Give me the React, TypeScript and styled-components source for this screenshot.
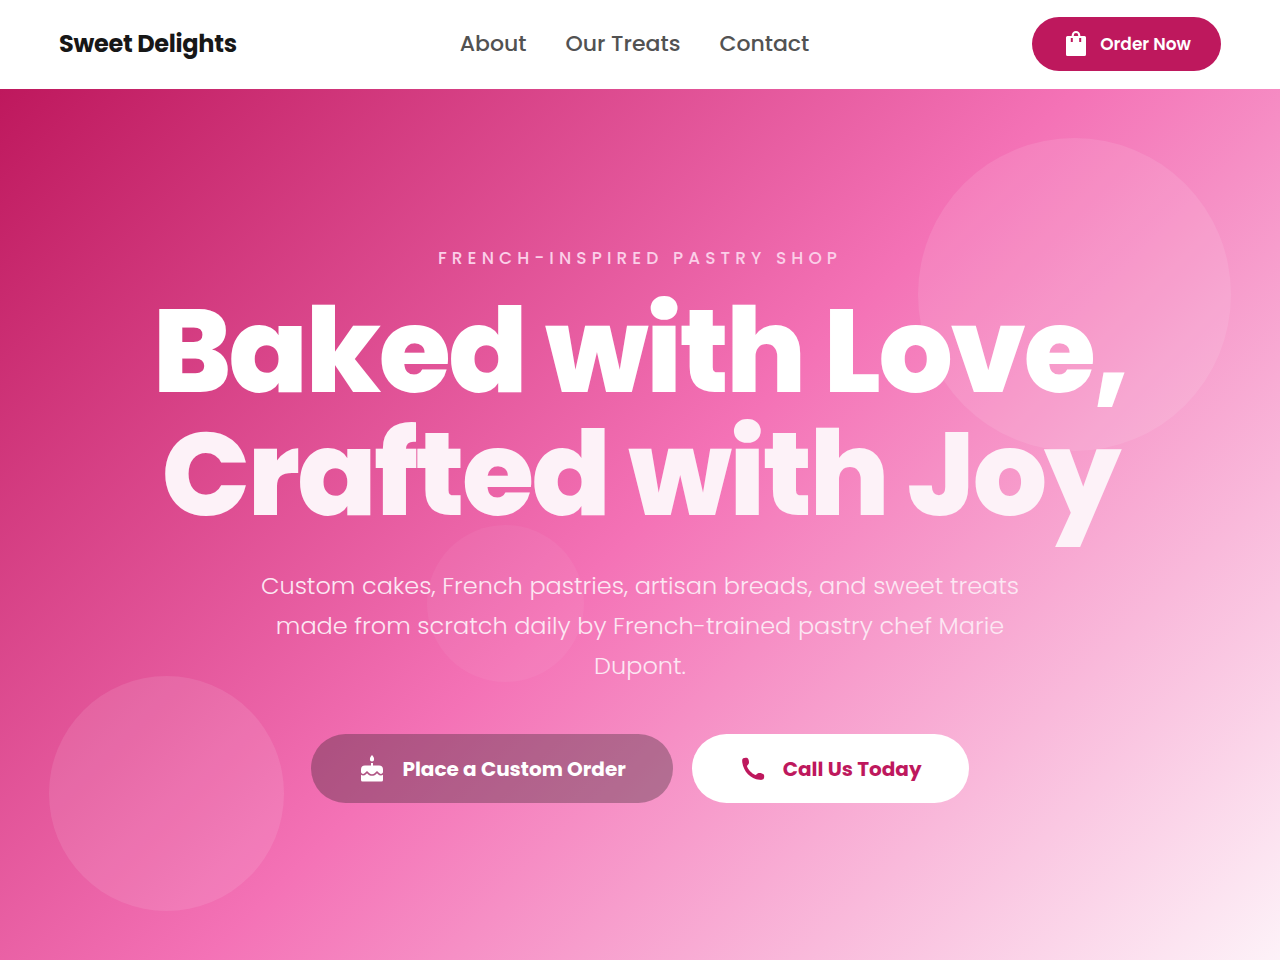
import React from "react";
import styled, { createGlobalStyle } from "styled-components";

const GlobalStyle = createGlobalStyle`
  *, *::before, *::after { box-sizing: border-box; }
  body { margin: 0; background: #fff; color: #171717; font-family: Poppins, Inter, "Open Sans", sans-serif; }
`;

const Page = styled.div`
  min-height: 100vh;
  display: flex;
  flex-direction: column;
`;

const Header = styled.header`
  display: flex;
  align-items: center;
  justify-content: space-between;
  padding: 17px 59px 18px;
  background: #fff;
`;

const Brand = styled.a`
  color: #171717;
  font-size: 24px;
  line-height: 36px;
  font-weight: 700;
  letter-spacing: -0.0125em;
  text-decoration: none;
`;

const Nav = styled.nav`
  display: flex;
  gap: 39px;
`;

const NavLink = styled.a`
  color: #525252;
  font-size: 22px;
  line-height: 36px;
  font-weight: 500;
  text-decoration: none;
`;

const Pill = styled.button<{ $tone: "solid" | "glass" | "light"; $small?: boolean }>`
  display: inline-flex;
  align-items: center;
  gap: ${(p) => (p.$small ? 12 : 16)}px;
  height: ${(p) => (p.$small ? 54 : 69)}px;
  padding: 0 ${(p) => (p.$small ? 30 : 47)}px;
  border: 0;
  border-radius: 40px;
  background: ${(p) => ({ solid: "#be185d", glass: "rgba(23, 23, 23, 0.3)", light: "#fff" })[p.$tone]};
  color: ${(p) => (p.$tone === "light" ? "#be185d" : "#fff")};
  font-family: inherit;
  font-size: ${(p) => (p.$small ? 17 : 20)}px;
  font-weight: ${(p) => (p.$small ? 600 : 700)};
  white-space: nowrap;
  cursor: pointer;
`;

const Hero = styled.main`
  position: relative;
  flex: 1;
  display: flex;
  flex-direction: column;
  align-items: center;
  justify-content: center;
  padding: 48px 24px;
  overflow: hidden;
  text-align: center;
  background: linear-gradient(135deg, #be185d 0%, #f472b6 50%, #fdf2f8 100%);
`;

const Bubble = styled.span<{ $size: number; $alpha: number }>`
  position: absolute;
  width: ${(p) => p.$size}px;
  height: ${(p) => p.$size}px;
  border-radius: 50%;
  background: rgba(255, 255, 255, ${(p) => p.$alpha});
`;

const TopBubble = styled(Bubble)`
  top: 49px;
  right: 49px;
`;

const BottomBubble = styled(Bubble)`
  bottom: 49px;
  left: 49px;
`;

const MiddleBubble = styled(Bubble)`
  top: 50%;
  left: 33.33%;
`;

const Content = styled.div`
  position: relative;
  display: flex;
  flex-direction: column;
  align-items: center;
`;

const Eyebrow = styled.p`
  margin: 0 0 20px;
  color: #fbcfe8;
  font-size: 17px;
  line-height: 24px;
  font-weight: 500;
  letter-spacing: 0.3em;
  text-transform: uppercase;
`;

const Title = styled.h1`
  margin: 0 0 30px;
  color: #fff;
  font-size: 117px;
  line-height: 123px;
  font-weight: 800;
  letter-spacing: -0.022em;
`;

const TitleAccent = styled.span`
  display: block;
  color: #fdf2f8;
`;

const Lead = styled.p`
  max-width: 784px;
  margin: 0 0 48px;
  color: #fce7f3;
  font-size: 24px;
  line-height: 40px;
  font-weight: 300;
`;

const Actions = styled.div`
  display: flex;
  flex-wrap: wrap;
  justify-content: center;
  gap: 19px;
`;

const Icon = ({ d, size }: { d: string; size: number }) => (
  <svg width={size} height={size} viewBox={`0 0 ${size} ${size}`} fill="currentColor" aria-hidden="true">
    <path fillRule="evenodd" d={d} />
  </svg>
);

const BAG =
  "M9.7 5V4.3a4.3 4.3 0 0 1 8.6 0V5h4.2A1.5 1.5 0 0 1 24 6.5v17a1.5 1.5 0 0 1-1.500 1.500h-17A1.500 1.500 0 0 1 4 23.500v-17A1.500 1.500 0 0 1 5.500 5zM11.800 5h4.400V4.300a2.200 2.200 0 0 0-4.400 0zM8.800 7v4h2V7zM17.200 7v4h2V7z";
const CAKE =
  "M14 0c1.200 1.200 2.100 2.800 2.100 4.200a2.100 2.400 0 0 1-4.200 0C11.900 2.800 12.800 1.200 14 0zM7 10.500h6V8h2v2.500h6a4 4 0 0 1 4 4v2.200c0 1.300-1 2.200-2.200 2.200-.7 0-1.200-.3-1.700-.8L19 15.900l-2.400 2.300c-1.400 1.300-3.800 1.300-5.200 0L9 15.900l-2.100 2.200c-.5.5-1 .8-1.700.8C4 18.900 3 18 3 16.700v-2.200a4 4 0 0 1 4-4zM3 19.800c.6.4 1.300.6 2.100.6 1.200 0 2.100-.4 2.900-1.200l1-1 1 1c2.200 2.100 5.800 2.100 8 0l1-1 1 1c.8.8 1.700 1.200 2.900 1.200.8 0 1.500-.2 2.100-.6V25a1.500 1.500 0 0 1-1.500 1.500h-19A1.500 1.500 0 0 1 3 25z";
const PHONE =
  "M4.200 3.200C5.500 2.600 7.500 2.500 8.400 3.100 9.800 4.200 10.300 7 9.800 8.600 9.400 9.800 8 10.200 8 11.200c1 3.300 4.500 7 8.400 8.800 1.100 0 1.400-1.400 2.600-1.800 1.600-.6 4.600 0 5.800 1.400.6 1 .5 3-.1 4.200-.7 1.200-2.700 1.200-4.200 1C11.500 23.800 4.500 16.500 3.300 7.500 3.100 6 3 3.900 4.200 3.200z";

export default function App() {
  return (
    <Page>
      <GlobalStyle />
      <Header>
        <Brand href="#">Sweet Delights</Brand>
        <Nav aria-label="Main">
          <NavLink href="#about">About</NavLink>
          <NavLink href="#treats">Our Treats</NavLink>
          <NavLink href="#contact">Contact</NavLink>
        </Nav>
        <Pill type="button" $tone="solid" $small>
          <Icon d={BAG} size={26} />
          Order Now
        </Pill>
      </Header>
      <Hero>
        <TopBubble $size={313} $alpha={0.1} />
        <BottomBubble $size={235} $alpha={0.1} />
        <MiddleBubble $size={157} $alpha={0.05} />
        <Content>
          <Eyebrow>French-Inspired Pastry Shop</Eyebrow>
          <Title>
            Baked with Love,
            <TitleAccent>Crafted with Joy</TitleAccent>
          </Title>
          <Lead>
            Custom cakes, French pastries, artisan breads, and sweet treats made from scratch daily by French-trained pastry chef Marie Dupont.
          </Lead>
          <Actions>
            <Pill type="button" $tone="glass">
              <Icon d={CAKE} size={28} />
              Place a Custom Order
            </Pill>
            <Pill type="button" $tone="light">
              <Icon d={PHONE} size={28} />
              Call Us Today
            </Pill>
          </Actions>
        </Content>
      </Hero>
    </Page>
  );
}
